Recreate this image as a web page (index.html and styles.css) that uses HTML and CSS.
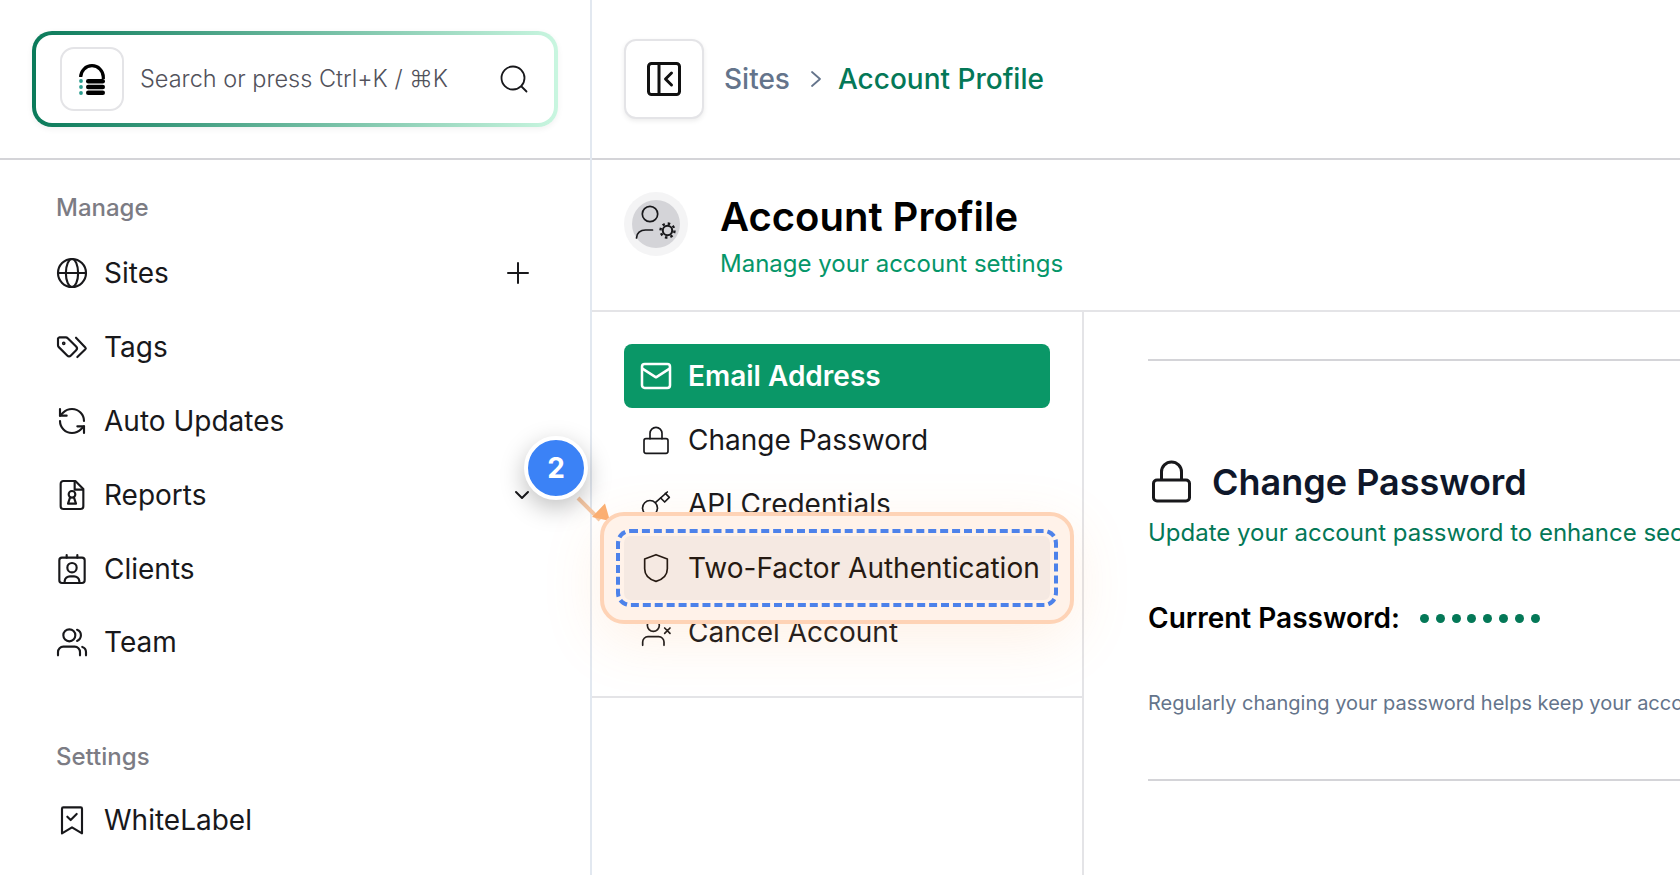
FILE: index.html
```html
<!DOCTYPE html>
<html lang="en">
<head>
    <meta charset="UTF-8">
    <meta name="viewport" content="width=device-width, initial-scale=1.0">
    <title>Account Profile</title>
    <link rel="stylesheet" href="styles.css">
</head>
<body>
    <div class="app">
        <aside class="sidebar">
            <div class="sidebar-top">
                <div class="search">
                    <span class="logo-box">
                        <svg width="28" height="34" viewBox="0 0 28 34">
                            <path d="M2.700 15a11.300 11.300 0 0 1 22.600 0v2" fill="none" stroke="#000" stroke-width="3.2"/>
                            <rect x="8" y="17" width="19" height="4.400" rx="2.200" fill="#000"/>
                            <rect x="8" y="22.800" width="19" height="4.400" rx="2.200" fill="#000"/>
                            <rect x="8" y="28.600" width="19" height="4.400" rx="2.200" fill="#000"/>
                            <circle cx="3" cy="19" r="1.900" fill="#2a9d8f"/>
                            <circle cx="3" cy="25" r="1.900" fill="#2a9d8f"/>
                            <circle cx="3" cy="31" r="1.900" fill="#2a9d8f"/>
                        </svg>
                    </span>
                    <span class="search-text">Search or press Ctrl+K / ⌘K</span>
                    <svg class="search-icon" width="30" height="30" viewBox="0 0 30 30" fill="none" stroke="#18181b" stroke-width="1.8" stroke-linecap="round">
                        <circle cx="14" cy="14" r="11.5"/>
                        <path d="M22.5 22.5l5 5"/>
                    </svg>
                </div>
            </div>
            <nav class="side-nav">
                <p class="side-label">Manage</p>
                <a class="side-item">
                    <svg class="ico" viewBox="0 0 24 24"><circle cx="12" cy="12" r="10.5"/><ellipse cx="12" cy="12" rx="4.6" ry="10.5"/><path d="M1.5 12h21"/></svg>
                    <span>Sites</span>
                    <svg class="side-extra" width="26" height="26" viewBox="0 0 26 26" fill="none" stroke="#18181b" stroke-width="2" stroke-linecap="round"><path d="M13 3v20M3 13h20"/></svg>
                </a>
                <a class="side-item">
                    <svg class="ico" viewBox="0 0 24 24"><path d="M1.500 5.500v5.200a2 2 0 0 0 .6 1.400l6.300 6.300a2 2 0 0 0 2.800 0l3.900-3.900a2 2 0 0 0 0-2.800L8.800 5.400a2 2 0 0 0-1.400-.6H2.500z"/><path d="M15 5l7 7.300a1 1 0 0 1 0 1.400L16 19.500"/><circle cx="5.800" cy="9.200" r=".6"/></svg>
                    <span>Tags</span>
                </a>
                <a class="side-item">
                    <svg class="ico" viewBox="0 0 24 24"><path d="M21 12a9 9 0 0 0-9-9 9.750 9.750 0 0 0-6.740 2.740L3 8"/><path d="M3 3v5h5"/><path d="M3 12a9 9 0 0 0 9 9 9.750 9.750 0 0 0 6.740-2.740L21 16"/><path d="M16 16h5v5"/></svg>
                    <span>Auto Updates</span>
                </a>
                <a class="side-item">
                    <svg class="ico" viewBox="0 0 24 24"><path d="M14.500 1.500H5.500a2 2 0 0 0-2 2v17a2 2 0 0 0 2 2h13a2 2 0 0 0 2-2V7.500z"/><path d="M14 2v6h6"/><circle cx="12" cy="11.500" r="2.500"/><path d="M10.500 14l-1.500 4.500h6L13.500 14"/></svg>
                    <span>Reports</span>
                    <svg class="side-extra chev" width="16" height="10" viewBox="0 0 16 10" fill="none" stroke="#18181b" stroke-width="2" stroke-linecap="round" stroke-linejoin="round"><path d="M2 2l6 6 6-6"/></svg>
                </a>
                <a class="side-item">
                    <svg class="ico" viewBox="0 0 24 24"><rect x="2.500" y="3.500" width="19" height="19" rx="2"/><path d="M8 1.500v2M16 1.500v2"/><circle cx="12" cy="11" r="3.500"/><path d="M6.500 22.500v-1.500a4 4 0 0 1 4-3.500h3a4 4 0 0 1 4 3.500v1.500"/></svg>
                    <span>Clients</span>
                </a>
                <a class="side-item">
                    <svg class="ico" viewBox="0 0 24 24"><circle cx="10" cy="7" r="4.500"/><path d="M1.500 22v-2.500a4 4 0 0 1 4-4h8.500a4 4 0 0 1 4 4V22"/><path d="M15.800 2.800a4.500 4.500 0 0 1 0 8.400"/><path d="M22.500 22v-2.500a4 4 0 0 0-2.800-3.800"/></svg>
                    <span>Team</span>
                </a>
                <p class="side-label settings">Settings</p>
                <a class="side-item">
                    <svg class="ico" viewBox="0 0 24 24"><path d="M4.500 22V3.500a1 1 0 0 1 1-1h13a1 1 0 0 1 1 1V22L12 17.500z"/><path d="M8.500 9.500l2.500 2.500 4.500-4.500"/></svg>
                    <span>WhiteLabel</span>
                </a>
            </nav>
        </aside>

        <main class="main">
            <header class="topbar">
                <button class="collapse-btn">
                    <svg width="34" height="34" viewBox="0 0 34 34" fill="none" stroke="#111" stroke-width="3" stroke-linecap="round" stroke-linejoin="round"><rect x="1.500" y="1.500" width="31" height="31" rx="3"/><path d="M12 2v30"/><path d="M24.500 11l-6 6 6 6"/></svg>
                </button>
                <span class="crumb">Sites</span>
                <svg class="crumb-sep" width="12" height="20" viewBox="0 0 12 20" fill="none" stroke="#64748b" stroke-width="1.800" stroke-linecap="round" stroke-linejoin="round"><path d="M2 3l8 7-8 7"/></svg>
                <span class="crumb current">Account Profile</span>
            </header>

            <section class="page-head">
                <span class="head-icon">
                    <span class="head-icon-inner">
                        <svg width="48" height="48" viewBox="0 0 48 48" fill="none" stroke="#18181b" stroke-width="1.700" stroke-linecap="round">
                            <circle cx="18" cy="14" r="7.700"/>
                            <path d="M4.500 38c0-5 4-8 9-8h7"/>
                            <circle cx="35.500" cy="30.500" r="4.700" stroke-width="2"/>
                            <circle cx="35.500" cy="30.500" r="7" stroke-width="2.400" stroke-dasharray="2.500 3" stroke-linecap="butt"/>
                        </svg>
                    </span>
                </span>
                <div>
                    <h1>Account Profile</h1>
                    <p class="head-sub">Manage your account settings</p>
                </div>
            </section>

            <div class="columns">
                <div class="menu-col">
                    <ul class="menu">
                        <li class="menu-item active">
                            <svg class="ico" viewBox="0 0 24 24"><rect x="1.500" y="3" width="21" height="18" rx="2"/><path d="M1.800 6.500l10.200 6.500 10.200-6.500"/></svg>
                            Email Address
                        </li>
                        <li class="menu-item">
                            <svg class="ico thin" viewBox="0 0 24 24"><rect x="3" y="11" width="18" height="11" rx="1.500"/><path d="M7.500 11V7a4.500 4.500 0 0 1 9 0v4"/></svg>
                            Change Password
                        </li>
                        <li class="menu-item">
                            <svg class="ico thin" viewBox="0 0 24 24"><circle cx="7.500" cy="15" r="5.600"/><path d="M11.500 11L20.500 3"/><path d="M15.500 7.500l3 3 3.500-3.500-3-3"/></svg>
                            API Credentials
                        </li>
                        <li class="menu-item picked">
                            <svg class="ico thin" viewBox="0 0 24 24"><path d="M12 2l8.500 3.200v7.300c0 4.800-3.500 8-8.500 9.500-5-1.500-8.500-4.700-8.500-9.500V5.200z"/></svg>
                            Two-Factor Authentication
                        </li>
                        <li class="menu-item">
                            <svg class="ico thin" viewBox="0 0 24 24"><circle cx="10" cy="7" r="4.500"/><path d="M2 22v-2.500a4 4 0 0 1 4-4h8a4 4 0 0 1 4 4V22"/><path d="M18.500 9l4 4M22.500 9l-4 4"/></svg>
                            Cancel Account
                        </li>
                    </ul>
                </div>

                <div class="detail">
                    <div class="detail-box">
                        <h2>
                            <svg width="44" height="46" viewBox="0 0 44 46" fill="none" stroke="#18181b" stroke-width="3" stroke-linejoin="round"><rect x="5.500" y="21" width="36" height="21" rx="3.500"/><path d="M13.500 21v-8a10 10 0 0 1 20 0v8"/></svg>
                            Change Password
                        </h2>
                        <p class="detail-sub">Update your account password to enhance security and protect your data</p>
                        <div class="pw-row">
                            <strong>Current Password:</strong>
                            <span class="dots"><i></i><i></i><i></i><i></i><i></i><i></i><i></i><i></i></span>
                        </div>
                        <p class="note">Regularly changing your password helps keep your account secure and protected from unauthorized access</p>
                    </div>
                </div>
            </div>
        </main>

        <!-- step marker -->
        <svg class="pointer" width="50" height="50" viewBox="0 0 50 50">
            <path d="M4 4l22 22" stroke="#f6c9a6" stroke-width="4"/>
            <path d="M31 9.500L18 23l18 4z" fill="#fbb074"/>
        </svg>
        <span class="step-badge">2</span>
    </div>
</body>
</html>
```

FILE: styles.css
```css
* {
    box-sizing: border-box;
}
body {
    margin: 0;
    font-family: Inter, "Noto Sans", sans-serif;
    color: #18181b;
    background: white;
    overflow: hidden;
}
p, h1, h2, ul {
    margin: 0;
    padding: 0;
}
.app {
    position: relative;
    display: grid;
    grid-template-columns: 592px 1088px;
    height: 875px;
    overflow: hidden;
}
.main {
    min-width: 0;
}
.ico {
    width: 32px;
    height: 32px;
    flex: none;
    fill: none;
    stroke: currentColor;
    stroke-width: 1.6;
    stroke-linecap: round;
    stroke-linejoin: round;
}
.ico.thin {
    stroke-width: 1.25;
}

/* sidebar */
.sidebar {
    border-right: 2px solid #e2e8f0;
}
.sidebar-top {
    height: 160px;
    padding: 31px 32px 0 32px;
    border-bottom: 2px solid #d4d4d8;
}
.search {
    display: flex;
    align-items: center;
    height: 96px;
    padding: 0 25px 0 24px;
    border: 4px solid transparent;
    border-radius: 20px;
    background: linear-gradient(white, white) padding-box, linear-gradient(90deg, #0a7a5a, #c9f6e0) border-box;
    box-shadow: 0 2px 6px rgba(0, 0, 0, 0.06);
}
.logo-box {
    display: flex;
    align-items: center;
    justify-content: center;
    width: 64px;
    height: 64px;
    border: 2px solid #e4e4e7;
    border-radius: 14px;
}
.search-text {
    margin-left: 16px;
    margin-bottom: 2px;
    font-size: 23.5px;
    font-weight: 300;
    color: #52525b;
    white-space: nowrap;
}
.search-icon {
    margin-left: auto;
}
.side-nav {
    padding: 30px 56px;
}
.side-label {
    height: 36px;
    line-height: 36px;
    font-size: 24px;
    font-weight: 500;
    color: #7c7c84;
}
.side-label.settings {
    margin-top: 59.4px;
    margin-bottom: 8px;
}
.side-item {
    display: flex;
    align-items: center;
    gap: 16px;
    height: 73.8px;
    font-size: 28px;
}
.side-label + .side-item {
    margin-top: 10.6px;
}
.side-label.settings + .side-item {
    margin-top: 0;
}
.side-extra {
    margin-left: auto;
    margin-right: 3px;
}
.chev {
    margin-right: 4px;
}

/* top bar */
.topbar {
    display: flex;
    align-items: center;
    height: 160px;
    padding-left: 32px;
    border-bottom: 2px solid #d4d4d8;
    font-size: 28px;
    font-weight: 500;
}
.collapse-btn {
    display: flex;
    align-items: center;
    justify-content: center;
    width: 80px;
    height: 80px;
    margin-right: 20px;
    padding: 0;
    background: white;
    border: 2px solid #e4e4e7;
    border-radius: 12px;
    box-shadow: 0 2px 5px rgba(0, 0, 0, 0.08);
}
.crumb {
    color: #64748b;
}
.crumb.current {
    color: #047857;
}
.crumb-sep {
    margin: 0 16px 0 20px;
}

/* page heading */
.page-head {
    display: flex;
    align-items: flex-start;
    gap: 32px;
    height: 152px;
    padding: 32px 0 0 32px;
    border-bottom: 2px solid #e4e4e7;
}
.head-icon {
    display: flex;
    align-items: center;
    justify-content: center;
    width: 64px;
    height: 64px;
    background: #f4f4f5;
    border-radius: 50%;
}
.head-icon-inner {
    display: block;
    width: 48px;
    height: 48px;
    background: #d4d4d8;
    border-radius: 50%;
}
h1 {
    margin-top: 1px;
    font-size: 40px;
    line-height: 48px;
    font-weight: 600;
    color: black;
}
.head-sub {
    margin-top: 5px;
    font-size: 24px;
    line-height: 36px;
    color: #059669;
}

/* columns */
.columns {
    display: grid;
    grid-template-columns: 492px 596px;
    height: 563px;
}
.menu-col {
    height: 386px;
    padding: 32px 34px 0 32px;
    border-bottom: 2px solid #e4e4e7;
}
.detail {
    overflow: hidden;
    padding-left: 64px;
    border-left: 2px solid #e4e4e7;
    margin-left: -2px;
}
.menu {
    list-style: none;
}
.menu-item {
    position: relative;
    display: flex;
    align-items: center;
    gap: 16px;
    height: 64px;
    padding-left: 16px;
    font-size: 28px;
    white-space: nowrap;
    color: #18181b;
}
.menu-item.active {
    background: #0a9767;
    color: white;
    font-weight: 600;
    border-radius: 8px;
}
.menu-item.active .ico {
    stroke-width: 1.9;
}
.menu-item.picked {
    z-index: 1;
    color: #261a12;
}
.menu-item.picked::before {
    content: "";
    position: absolute;
    z-index: -2;
    inset: -24px -24px;
    background: #fff2e9;
    border: 4px solid #fed3b6;
    border-radius: 24px;
    box-shadow: 0 16px 60px rgba(251, 146, 60, 0.13);
}
.menu-item.picked::after {
    content: "";
    position: absolute;
    z-index: -1;
    inset: -7px -8px;
    padding: 3px 4px;
    border: 4px dashed #4d82ea;
    border-radius: 14px;
    background: #f5e9e2 content-box;
}

/* detail */
.detail-box {
    width: 700px;
    height: 422px;
    margin-top: 47px;
    border-top: 2px solid #d4d4d8;
    border-bottom: 2px solid #d4d4d8;
    padding-top: 96px;
}
h2 {
    display: flex;
    align-items: center;
    gap: 20px;
    height: 50px;
    font-size: 36px;
    font-weight: 600;
    color: #0f172a;
    white-space: nowrap;
}
.detail-sub {
    margin-top: 8px;
    font-size: 24px;
    line-height: 36px;
    color: #047857;
    white-space: nowrap;
}
.pw-row {
    display: flex;
    align-items: center;
    gap: 20px;
    margin-top: 47px;
    height: 40px;
    font-size: 28px;
    color: black;
}
.pw-row strong {
    font-weight: 600;
}
.dots {
    display: flex;
    gap: 6.800px;
}
.dots i {
    width: 9px;
    height: 9px;
    background: #047857;
    border-radius: 50%;
}
.note {
    margin-top: 50px;
    font-size: 20px;
    line-height: 30px;
    color: #64748b;
    white-space: nowrap;
}

/* step marker laid over the page */
.pointer {
    position: absolute;
    left: 574px;
    top: 494px;
}
.step-badge {
    position: absolute;
    left: 524px;
    top: 436px;
    width: 64px;
    height: 64px;
    display: flex;
    align-items: center;
    justify-content: center;
    background: #3b82f6;
    border: 4px solid white;
    border-radius: 50%;
    color: white;
    font-size: 28px;
    font-weight: 700;
    box-shadow: 0 8px 24px rgba(0, 0, 0, 0.25);
}
```
